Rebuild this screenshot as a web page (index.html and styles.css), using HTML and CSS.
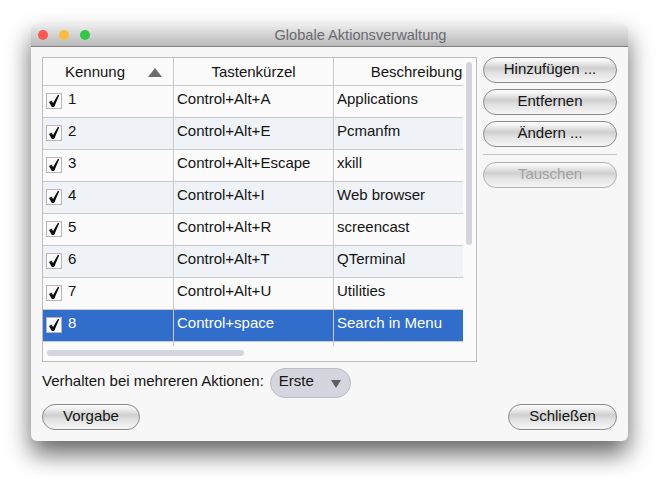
FILE: index.html
```html
<!DOCTYPE html>
<html lang="de">
<head>
  <meta charset="UTF-8" />
  <title>Globale Aktionsverwaltung</title>
  <link rel="stylesheet" href="styles.css">
</head>
<body>
  <svg class="defs">
    <symbol id="tick" viewBox="0 0 14 14">
      <path d="M2 8 4.6 6.4 6 9 11 0.8 12.2 1.2 7.2 13 4.8 13Z"/>
    </symbol>
  </svg>

  <div class="window">
    <div class="titlebar">
      <div class="lights">
        <span class="light red"></span>
        <span class="light yellow"></span>
        <span class="light green"></span>
      </div>
      <div class="title">Globale Aktionsverwaltung</div>
    </div>

    <div class="content">
      <div class="top">
        <div class="frame">
          <div class="viewport">
            <table class="actions">
              <colgroup>
                <col class="col-id"><col class="col-keys"><col class="col-desc">
              </colgroup>
              <thead>
                <tr>
                  <th class="sorted"><span>Kennung</span><i class="arrow-up"></i></th>
                  <th>Tastenkürzel</th>
                  <th>Beschreibung</th>
                </tr>
              </thead>
              <tbody>
                <tr>
                  <td><div class="id"><i class="check"><svg><use href="#tick"/></svg></i>1</div></td>
                  <td>Control+Alt+A</td><td>Applications</td>
                </tr>
                <tr class="alt">
                  <td><div class="id"><i class="check"><svg><use href="#tick"/></svg></i>2</div></td>
                  <td>Control+Alt+E</td><td>Pcmanfm</td>
                </tr>
                <tr>
                  <td><div class="id"><i class="check"><svg><use href="#tick"/></svg></i>3</div></td>
                  <td>Control+Alt+Escape</td><td>xkill</td>
                </tr>
                <tr class="alt">
                  <td><div class="id"><i class="check"><svg><use href="#tick"/></svg></i>4</div></td>
                  <td>Control+Alt+I</td><td>Web browser</td>
                </tr>
                <tr>
                  <td><div class="id"><i class="check"><svg><use href="#tick"/></svg></i>5</div></td>
                  <td>Control+Alt+R</td><td>screencast</td>
                </tr>
                <tr class="alt">
                  <td><div class="id"><i class="check"><svg><use href="#tick"/></svg></i>6</div></td>
                  <td>Control+Alt+T</td><td>QTerminal</td>
                </tr>
                <tr>
                  <td><div class="id"><i class="check"><svg><use href="#tick"/></svg></i>7</div></td>
                  <td>Control+Alt+U</td><td>Utilities</td>
                </tr>
                <tr class="selected">
                  <td><div class="id"><i class="check"><svg><use href="#tick"/></svg></i>8</div></td>
                  <td>Control+space</td><td>Search in Menu</td>
                </tr>
                <tr class="filler"><td></td><td></td><td></td></tr>
              </tbody>
            </table>
          </div>
          <div class="scroll-v"></div>
          <div class="scroll-h"></div>
        </div>

        <div class="side">
          <button class="btn">Hinzufügen ...</button>
          <button class="btn">Entfernen</button>
          <button class="btn">Ändern ...</button>
          <div class="sep"></div>
          <button class="btn" disabled>Tauschen</button>
        </div>
      </div>

      <div class="behaviour">
        <span class="behaviour-label">Verhalten bei mehreren Aktionen:</span>
        <div class="combo">Erste<i class="arrow-down"></i></div>
      </div>

      <div class="bottom">
        <button class="btn btn-default">Vorgabe</button>
        <button class="btn btn-close">Schließen</button>
      </div>
    </div>
  </div>
</body>
</html>
```

FILE: styles.css
```css
:root {
  --text: #141414;
  --line: #c9c9c9;
  --frame: #bdbdbd;
  --select: #316ecb;
  --scroll: #d4d5de;
  --font: 'Liberation Sans', Arial, sans-serif;
}

html, body {
  margin: 0;
  padding: 0;
  height: 100%;
  background: #fff;
  overflow: hidden;
  font-family: var(--font);
  font-size: 15px;
  color: var(--text);
}

body {
  padding: 24px 32px 0 31px;
  box-sizing: border-box;
}

.defs {
  display: none;
}

.window {
  width: 597px;
  height: 417px;
  background: #f7f7f7;
  border-radius: 6px;
  box-shadow: 0 13px 24px rgba(0, 0, 0, 0.6);
  overflow: hidden;
}

.titlebar {
  display: flex;
  align-items: center;
  height: 22px;
  background: linear-gradient(#ededed, #b9b9b9);
  border-bottom: 1px solid #7e7e7e;
  position: relative;
}

.lights {
  display: flex;
  gap: 11px;
  padding-left: 7px;
}

.light {
  width: 10px;
  height: 10px;
  border-radius: 50%;
}

.red { background: #fc5753; }
.yellow { background: #fdbc40; }
.green { background: #33c748; }

.title {
  position: absolute;
  inset: 0 0 0 62px;
  text-align: center;
  line-height: 22px;
  font-size: 14.6px;
  color: #6a6a72;
}

.content {
  padding: 10px 11px 11px;
}

.top {
  display: flex;
  gap: 6px;
}

.frame {
  position: relative;
  width: 433px;
  height: 303px;
  border: 1px solid var(--frame);
  background: #fbfbfb;
}

.viewport {
  width: 420px;
  height: 288px;
  overflow: hidden;
}

.actions {
  width: 457px;
  table-layout: fixed;
  border-collapse: separate;
  border-spacing: 0;
}

.col-id { width: 131px; }
.col-keys { width: 160px; }
.col-desc { width: 166px; }

.actions th {
  height: 27px;
  padding: 0;
  font-weight: normal;
  text-align: center;
  border-right: 1px solid var(--line);
  border-bottom: 1px solid var(--line);
  background: #fbfbfb;
}

.actions th.sorted {
  text-align: left;
  padding-left: 22px;
}

.arrow-up {
  display: inline-block;
  margin-left: 23px;
  width: 0;
  height: 0;
  border-left: 7px solid transparent;
  border-right: 7px solid transparent;
  border-bottom: 9px solid #6d6d6d;
}

.actions td {
  height: 31px;
  padding: 0 0 0 3px;
  border-right: 1px solid var(--line);
  border-bottom: 1px solid var(--line);
  vertical-align: top;
  line-height: 25px;
  white-space: nowrap;
}

.alt td { background: #eff2f7; }

.selected td {
  background: var(--select);
  color: #fff;
}

.actions .filler td {
  height: 4px;
  border-bottom: none;
  background: #fbfbfb;
}

.id {
  display: flex;
  gap: 6px;
}

.check {
  width: 14px;
  height: 14px;
  margin-top: 7px;
  border: 1px solid #b5b5b5;
  background: #fbfbfb;
}

.check svg {
  display: block;
  width: 14px;
  height: 14px;
  fill: #111;
}

.scroll-v {
  position: absolute;
  left: 423px;
  top: 4px;
  width: 6px;
  height: 183px;
  border-radius: 3px;
  background: var(--scroll);
}

.scroll-h {
  position: absolute;
  left: 4px;
  top: 292px;
  width: 197px;
  height: 6px;
  border-radius: 3px;
  background: var(--scroll);
}

.side {
  display: flex;
  flex-direction: column;
  gap: 6px;
  width: 134px;
}

.btn {
  height: 26px;
  padding: 0 0 4px;
  font: inherit;
  color: var(--text);
  border: 1px solid #8b8b8b;
  border-radius: 13px;
  background: linear-gradient(#fafafa 0, #f4f4f4 12%, #cfcfcf 42%, #e2e2e2 62%, #f6f6f6 100%);
}

.btn:disabled {
  color: #a3a3a3;
  border-color: #b0b0b0;
}

.sep {
  height: 1px;
  margin: 1px 0;
  background: #c4c4c4;
}

.behaviour {
  display: flex;
  align-items: center;
  gap: 6px;
  margin-top: 6px;
}

.behaviour-label {
  padding-bottom: 5px;
}

.combo {
  display: flex;
  align-items: center;
  justify-content: space-between;
  box-sizing: border-box;
  width: 81px;
  height: 30px;
  padding: 0 9px 6px 8px;
  border: 1px solid #bcbcc4;
  border-radius: 15px;
  background: #d4d5de;
}

.arrow-down {
  width: 0;
  height: 0;
  margin-top: 7px;
  border-left: 5.5px solid transparent;
  border-right: 5.5px solid transparent;
  border-top: 8px solid #5f5f5f;
}

.bottom {
  display: flex;
  justify-content: space-between;
  margin-top: 6px;
}

.btn-default { width: 98px; }
.btn-close { width: 109px; }
```
